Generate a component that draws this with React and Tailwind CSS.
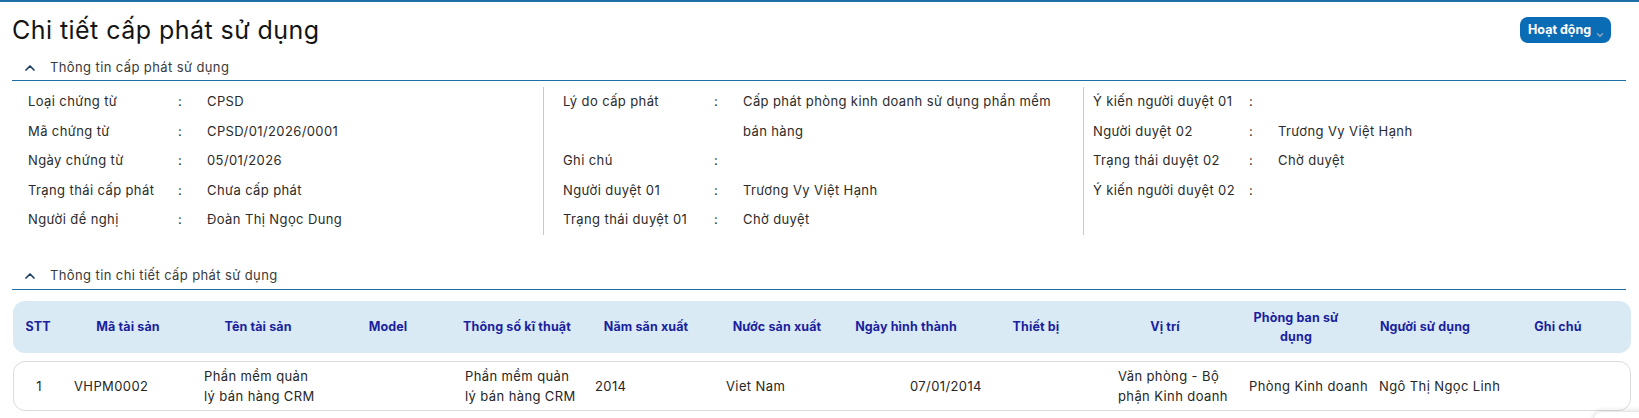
import { ChevronUp, ChevronDown } from "lucide-react";

const font = { fontFamily: "Inter, 'Noto Sans', sans-serif" };

const info = [
  {
    cls: "w-[531px] pl-4",
    label: "w-[150px]",
    rows: [
      ["Loại chứng từ", "CPSD"],
      ["Mã chứng từ", "CPSD/01/2026/0001"],
      ["Ngày chứng từ", "05/01/2026"],
      ["Trạng thái cấp phát", "Chưa cấp phát"],
      ["Người đề nghị", "Đoàn Thị Ngọc Dung"],
    ],
  },
  {
    cls: "w-[540px] pl-[19px] border-l border-[#c8c8c8]",
    label: "w-[151px]",
    rows: [
      ["Lý do cấp phát", "Cấp phát phòng kinh doanh sử dụng phần mềm bán hàng"],
      ["Ghi chú", ""],
      ["Người duyệt 01", "Trương Vy Việt Hạnh"],
      ["Trạng thái duyệt 01", "Chờ duyệt"],
    ],
  },
  {
    cls: "flex-1 pl-[9px] border-l border-[#c8c8c8]",
    label: "w-[156px]",
    rows: [
      ["Ý kiến người duyệt 01", ""],
      ["Người duyệt 02", "Trương Vy Việt Hạnh"],
      ["Trạng thái duyệt 02", "Chờ duyệt"],
      ["Ý kiến người duyệt 02", ""],
    ],
  },
];

// width, header lines, body lines, body padding
const columns = [
  { w: "w-[50px]", head: ["STT"], body: ["1"], pad: "items-center" },
  { w: "w-[130px]", head: ["Mã tài sản"], body: ["VHPM0002"], pad: "pl-[10px]" },
  { w: "w-[130px]", head: ["Tên tài sản"], body: ["Phần mềm quản", "lý bán hàng CRM"], pad: "pl-[10px]" },
  { w: "w-[130px]", head: ["Model"], body: [], pad: "pl-[10px]" },
  { w: "w-[128px]", head: ["Thông số kĩ thuật"], body: ["Phần mềm quản", "lý bán hàng CRM"], pad: "pl-[11px]" },
  { w: "w-[130px]", head: ["Năm săn xuất"], body: ["2014"], pad: "pl-[13px]" },
  { w: "w-[132px]", head: ["Nước sản xuất"], body: ["Viet Nam"], pad: "pl-[14px]" },
  { w: "w-[126px]", head: ["Ngày hình thành"], body: ["07/01/2014"], pad: "pl-[66px]" },
  { w: "w-[134px]", head: ["Thiết bị"], body: [], pad: "pl-[14px]" },
  { w: "w-[124px]", head: ["Vị trí"], body: ["Văn phòng - Bộ", "phận Kinh doanh"], pad: "pl-[14px]" },
  { w: "w-[138px]", head: ["Phòng ban sử", "dụng"], body: ["Phòng Kinh doanh"], pad: "pl-[21px]" },
  { w: "w-[120px]", head: ["Người sử dụng"], body: ["Ngô Thị Ngọc Linh"], pad: "pl-[13px]" },
  { w: "flex-1", head: ["Ghi chú"], body: [], pad: "pl-[13px]" },
];

const SectionHeader = ({ title }) => (
  <div className="flex h-[26px] items-center border-b border-[#1f6ea6] pl-[10px]">
    <ChevronUp size={16} strokeWidth={2.6} className="text-[#1d3f66]" />
    <span className="ml-[12px] text-[13px] tracking-[0.03em] text-[#3a3a3a]">{title}</span>
  </div>
);

export default function App() {
  return (
    <div className="relative min-h-[418px] overflow-hidden border-t-2 border-[#1f6ea6] bg-white" style={font}>
      <div className="mt-[13px] flex h-[30px] items-center justify-between pl-3 pr-[28px]">
        <h1 className="text-[25px] leading-[30px] tracking-[0.018em] text-[#141414]">Chi tiết cấp phát sử dụng</h1>
        <button className="relative flex h-[26px] w-[91px] items-center rounded-lg bg-[#0b6cb6] pl-[8px] text-[12.5px] font-bold text-white">
          Hoạt động
          <ChevronDown size={10} strokeWidth={3} className="absolute right-[6px] top-[13px] text-[#9aa9b8]" />
        </button>
      </div>

      <div className="mx-3 mr-[13px] mt-[10px]">
        <SectionHeader title="Thông tin cấp phát sử dụng" />
        <div className="mt-[6px] flex">
          {info.map((col, i) => (
            <div key={i} className={col.cls}>
              {col.rows.map(([label, value]) => (
                <div key={label} className="flex text-[13px] leading-[29.5px] tracking-[0.03em] text-[#2b2b2b]">
                  <span className={`${col.label} shrink-0`}>{label}</span>
                  <span className="w-[29px] shrink-0">:</span>
                  <span className="max-w-[310px]">{value}</span>
                </div>
              ))}
            </div>
          ))}
        </div>

        <div className="mt-[29px]">
          <SectionHeader title="Thông tin chi tiết cấp phát sử dụng" />
        </div>
      </div>

      <div className="ml-[13px] mr-[8px]">
        <div className="mt-[11px] flex h-[52px] rounded-xl bg-[#d9eaf5]">
          {columns.map((c, i) => (
            <div key={i} className={`${c.w} flex flex-col items-center justify-center text-center text-[12.5px] font-bold leading-[19px] tracking-[0.01em] text-[#1b1f9e]`}>
              {c.head.map((h) => (
                <span key={h}>{h}</span>
              ))}
            </div>
          ))}
        </div>

        <div className="mt-[8px] flex h-[50px] rounded-xl border border-[#dcdcdc]">
          {columns.map((c, i) => (
            <div key={i} className={`${c.w} ${c.pad} flex flex-col justify-center whitespace-nowrap text-[13px] leading-[20px] tracking-[0.03em] text-[#262626]`}>
              {c.body.map((b) => (
                <span key={b}>{b}</span>
              ))}
            </div>
          ))}
        </div>
      </div>

      <div className="absolute left-[1594px] top-[410px] h-[40px] w-[60px] rounded-lg bg-white shadow-[0_0_6px_rgba(0,0,0,0.2)]" />
    </div>
  );
}
